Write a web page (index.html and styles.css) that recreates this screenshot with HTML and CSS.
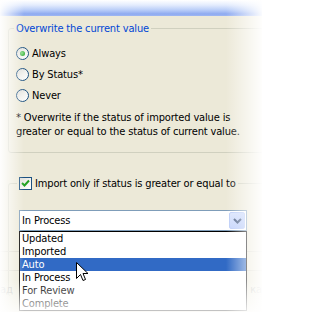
FILE: index.html
```
<!DOCTYPE html>
<html>
<head>
<meta charset="utf-8">
<link rel="stylesheet" href="styles.css">
</head>
<body>
<div class="page">
<div class="titlebar"></div>
<div class="panel">
  <fieldset class="group g1">
    <legend>Overwrite the current value</legend>
    <label class="opt"><span class="radio on"></span>Always</label>
    <label class="opt"><span class="radio"></span>By Status*</label>
    <label class="opt"><span class="radio"></span>Never</label>
    <p class="note">* Overwrite if the status of imported value is<br>greater or equal to the status of current value.</p>
  </fieldset>
  <fieldset class="group g2">
    <legend><span class="check"><svg width="11" height="11" viewBox="0 0 11 11"><path d="M2 5 L4.5 7.5 L9 2.5" fill="none" stroke="#21a121" stroke-width="2"/></svg></span>Import only if status is greater or equal to</legend>
    <div class="combo-wrap">
      <div class="combo">
        <span class="value">In Process</span>
        <span class="btn"><svg width="9" height="6" viewBox="0 0 9 6"><path d="M1 1 L4.5 4.5 L8 1" fill="none" stroke="#4d6185" stroke-width="2"/></svg></span>
      </div>
      <ul class="list">
        <li>Updated</li>
        <li>Imported</li>
        <li class="sel">Auto</li>
        <li>In Process</li>
        <li>For Review</li>
        <li>Complete</li>
      </ul>
      <svg class="cursor" width="13" height="21" viewBox="0 0 13 21"><path d="M0.5 0.5 L0.5 16.5 L4.5 12.5 L7 18.5 L9.5 17.5 L7 11.5 L12 11.5 Z" fill="#fff" stroke="#000" stroke-width="1"/></svg>
    </div>
    <div class="under"></div>
    <div class="under-row"><span>ад</span><span>ка</span></div>
  </fieldset>
</div>
<div class="fade fade-left"></div>
<div class="fade fade-right"></div>
<div class="fade fade-bottom"></div>
</div>
</body>
</html>
```
FILE: styles.css
```
html, body {
  margin: 0;
  padding: 0;
  overflow: hidden;
  background: #fff;
}
.page {
  width: 262px;
  height: 312px;
  overflow: hidden;
  position: relative;
  background: #ece9d8;
  font-family: "DejaVu Sans Condensed", "DejaVu Sans", sans-serif;
  font-stretch: condensed;
  font-size: 11px;
  letter-spacing: -0.15px;
  color: #000;
}
.titlebar {
  height: 16px;
  background: linear-gradient(to bottom, #ffffff 0px, #e4ecfd 5px, #b9cdf8 10px, #8eaaf0 14px, #9fb7f2 16px);
}
.panel {
  padding-left: 8px;
}
.group {
  margin: 0;
  border: 1px solid #d0d0bf;
  border-radius: 3px;
  min-width: 0;
  width: 300px;
  box-sizing: border-box;
}
.g1 {
  margin-top: 6px;
  padding: 8px 0 13px 5px;
}
.g1 legend {
  padding: 0 2px;
  line-height: 13px;
  color: #0046d5;
}
.opt {
  display: flex;
  align-items: center;
  height: 21px;
  padding-left: 2px;
}
.radio {
  width: 13px;
  height: 13px;
  box-sizing: border-box;
  border: 1px solid #1c5180;
  border-radius: 50%;
  background: linear-gradient(135deg, #dcdcd7 0%, #f2f2ee 50%, #ffffff 100%);
  margin-right: 3px;
  display: flex;
  align-items: center;
  justify-content: center;
}
.radio.on::after {
  content: "";
  width: 5px;
  height: 5px;
  border-radius: 50%;
  background: radial-gradient(circle at 40% 40%, #8fe08f, #21a121);
}
.note {
  margin: 5px 0 0 2px;
  line-height: 14px;
  white-space: nowrap;
}
.g2 {
  margin-top: 24px;
  padding: 20px 0 0 8px;
  border-bottom: none;
}
.g2 legend {
  padding: 0 2px;
  line-height: 13px;
  display: flex;
  align-items: center;
}
.check {
  width: 13px;
  height: 13px;
  box-sizing: border-box;
  border: 1px solid #1c5180;
  background: linear-gradient(135deg, #dcdcd7 0%, #f2f2ee 50%, #ffffff 100%);
  margin-right: 3px;
  display: flex;
  align-items: center;
  justify-content: center;
}
.combo-wrap {
  position: relative;
  margin-left: 2px;
  width: 228px;
  z-index: 2;
}
.combo {
  height: 21px;
  box-sizing: border-box;
  border: 1px solid #7f9db9;
  background: #fff;
  display: flex;
  align-items: center;
  justify-content: space-between;
  padding: 1px 1px 1px 2px;
}
.btn {
  width: 16px;
  height: 17px;
  box-sizing: border-box;
  border: 1px solid #bccdf7;
  border-radius: 2px;
  background: linear-gradient(135deg, #dce6fd 0%, #c3d3fb 60%, #b3c7f7 100%);
  display: flex;
  align-items: center;
  justify-content: center;
}
.list {
  position: absolute;
  top: 21px;
  left: 0;
  width: 228px;
  box-sizing: border-box;
  margin: 0;
  padding: 0;
  list-style: none;
  background: #fff;
  border: 1px solid #000;
}
.list li {
  height: 13px;
  line-height: 13px;
  padding-left: 2px;
}
.list li.sel {
  background: #316ac5;
  color: #fff;
}
.cursor {
  position: absolute;
  left: 57px;
  top: 52px;
}
.under {
  margin-left: -40px;
  margin-top: 20px;
  height: 18px;
  border-top: 1px solid #d8d5c6;
  border-bottom: 1px solid #d8d5c6;
}
.under-row {
  margin-left: -17px;
  width: 262px;
  margin-top: 12px;
  display: flex;
  justify-content: space-between;
  color: #a8a8a0;
}
.fade {
  position: absolute;
  pointer-events: none;
  z-index: 5;
}
.fade-left {
  left: 0;
  top: 0;
  width: 24px;
  height: 312px;
  background: linear-gradient(to right, rgba(255,255,255,0.95), rgba(255,255,255,0));
}
.fade-right {
  right: 0;
  top: 0;
  width: 36px;
  height: 312px;
  background: linear-gradient(to right, rgba(255,255,255,0), rgba(255,255,255,0.95));
}
.fade-bottom {
  left: 0;
  bottom: 0;
  width: 262px;
  height: 32px;
  background: linear-gradient(to bottom, rgba(255,255,255,0), rgba(255,255,255,0.8));
}
```
